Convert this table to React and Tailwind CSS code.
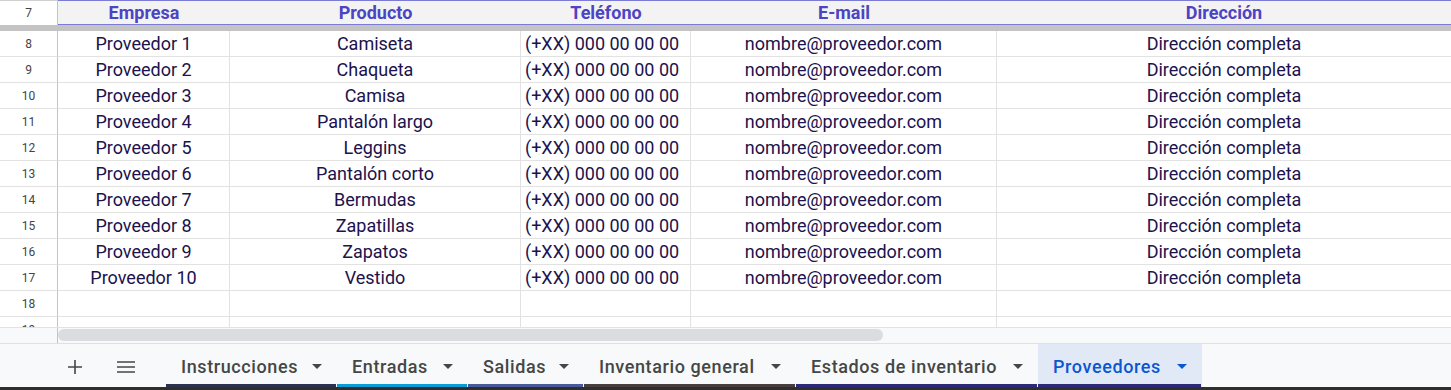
import React from "react";

const providers = [
  ["Proveedor 1", "Camiseta"],
  ["Proveedor 2", "Chaqueta"],
  ["Proveedor 3", "Camisa"],
  ["Proveedor 4", "Pantalón largo"],
  ["Proveedor 5", "Leggins"],
  ["Proveedor 6", "Pantalón corto"],
  ["Proveedor 7", "Bermudas"],
  ["Proveedor 8", "Zapatillas"],
  ["Proveedor 9", "Zapatos"],
  ["Proveedor 10", "Vestido"],
];

const tabs = [
  { name: "Instrucciones", w: "w-[171px]", bar: "bg-[#2c3150]" },
  { name: "Entradas", w: "w-[131px]", bar: "bg-[#0b9bd6]" },
  { name: "Salidas", w: "w-[116px]", bar: "bg-[#485a9a]" },
  { name: "Inventario general", w: "w-[212px]", bar: "bg-[#473e3e]" },
  { name: "Estados de inventario", w: "w-[242px]", bar: "bg-[#2e2a7b]" },
  { name: "Proveedores", w: "w-[164px]", bar: "bg-[#2e2a7b]", active: true },
];

const cols = "grid grid-cols-[58px_172px_291px_170px_306px_1fr]";

const Caret = ({ color }) => (
  <svg width="10" height="5" viewBox="0 0 10 5" className="shrink-0">
    <path d="M0 0 L10 0 L5 5 Z" fill={color} />
  </svg>
);

const Row = ({ n, cells }) => (
  <div className={`${cols} h-[26px] text-[18px] leading-[22px] text-[#20124d] overflow-hidden`}>
    <div className="flex items-center justify-center border-r border-b border-r-[#c4c4c4] border-b-[#e2e2e2] text-[12px] text-[#444]">
      {n}
    </div>
    <div className="flex items-center justify-center border-r border-b border-[#e2e2e2]">{cells[0]}</div>
    <div className="flex items-center justify-center border-r border-b border-[#e2e2e2]">{cells[1]}</div>
    <div className="flex items-center pl-[4px] border-r border-b border-[#e2e2e2] whitespace-nowrap">{cells[2]}</div>
    <div className="flex items-center justify-center border-r border-b border-[#e2e2e2]">{cells[3]}</div>
    <div className="flex items-center justify-center border-b border-[#e2e2e2]">{cells[4]}</div>
  </div>
);

export default function App() {
  return (
    <div className="w-[1451px] h-[390px] overflow-hidden bg-white flex flex-col font-['Roboto',sans-serif]">
      <div className="h-[327px] overflow-hidden shrink-0">
        {/* header row */}
        <div className={`${cols} h-[25px] overflow-hidden`}>
          <div className="flex items-center justify-center bg-white border-t border-r border-t-[#d0d0d0] border-r-[#c4c4c4] text-[12px] text-[#444]">
            7
          </div>
          <div className="col-span-5 grid grid-cols-[172px_291px_170px_306px_1fr] bg-[#f3f3f3] border-t border-b border-[#7c7bd6] text-[18px] leading-[21px] font-bold text-[#4c44c4]">
            <div className="flex items-center justify-center">Empresa</div>
            <div className="flex items-center justify-center">Producto</div>
            <div className="flex items-center justify-center">Teléfono</div>
            <div className="flex items-center justify-center">E-mail</div>
            <div className="flex items-center justify-center">Dirección</div>
          </div>
        </div>
        <div className="h-[6px] bg-[#c4c4c4]" />

        {providers.map(([p, prod], i) => (
          <Row
            key={p}
            n={i + 8}
            cells={[p, prod, "(+XX) 000 00 00 00", "nombre@proveedor.com", "Dirección completa"]}
          />
        ))}
        <Row n={18} cells={["", "", "", "", ""]} />
        <Row n={19} cells={["", "", "", "", ""]} />
      </div>

      {/* horizontal scrollbar */}
      <div className="h-[16px] flex border-t border-[#e2e2e2] bg-[#f8f9fa] shrink-0">
        <div className="w-[58px] border-r border-[#c4c4c4]" />
        <div className="flex-1 pt-[1px]">
          <div className="w-[825px] h-[12px] rounded-full bg-[#dadce0]" />
        </div>
      </div>

      {/* sheet tabs */}
      <div className="h-[44px] flex border-t border-[#e0e0e0] bg-[#f8f9fa] shrink-0">
        <div className="w-[166px] flex items-center pt-[3px]">
          <div className="w-[34px] ml-[58px] flex justify-center">
            <svg width="14" height="14" viewBox="0 0 14 14">
              <path d="M7 0 V14 M0 7 H14" stroke="#444746" strokeWidth="1.6" />
            </svg>
          </div>
          <div className="ml-[25px] flex justify-center">
            <svg width="18" height="12" viewBox="0 0 18 12">
              <path d="M0 1 H18 M0 6 H18 M0 11 H18" stroke="#444746" strokeWidth="1.6" />
            </svg>
          </div>
        </div>
        {tabs.map((t) => (
          <div key={t.name} className={`${t.w} flex flex-col ${t.active ? "bg-[#e1e9f7]" : ""}`}>
            <div
              className={`flex-1 flex items-center justify-between pl-[15px] pr-[15px] pt-[4px] text-[18px] tracking-[0.6px] font-medium whitespace-nowrap ${
                t.active ? "text-[#0b57d0]" : "text-[#444746]"
              }`}
            >
              <span>{t.name}</span>
              <Caret color={t.active ? "#0b57d0" : "#444746"} />
            </div>
            <div className={`h-[3px] mr-[1px] ${t.bar}`} />
          </div>
        ))}
      </div>
      <div className="h-[3px] bg-[#2e2e2e] shrink-0" />
    </div>
  );
}
